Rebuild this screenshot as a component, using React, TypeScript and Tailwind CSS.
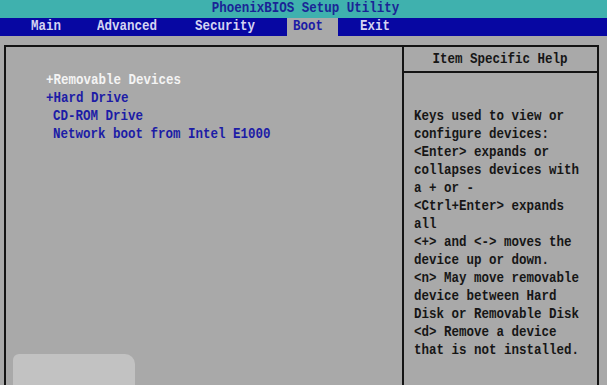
const mono = "font-['Liberation_Mono','DejaVu_Sans_Mono',monospace] font-bold";

function Line({ children, className = "" }: { children: React.ReactNode; className?: string }) {
  return (
    <div className="h-[18px] leading-[18px] whitespace-pre">
      <span className={`inline-block origin-left scale-x-[0.833] ${className}`}>{children}</span>
    </div>
  );
}

const help = [
  "Keys used to view or",
  "configure devices:",
  "<Enter> expands or",
  "collapses devices with",
  "a + or -",
  "<Ctrl+Enter> expands",
  "all",
  "<+> and <-> moves the",
  "device up or down.",
  "<n> May move removable",
  "device between Hard",
  "Disk or Removable Disk",
  "<d> Remove a device",
  "that is not installed.",
];

const bootItems = [
  { label: "+Removable Devices", color: "text-[#f4f4f4]", indent: "pl-[40px]" },
  { label: "+Hard Drive", color: "text-[#1c1ca6]", indent: "pl-[40px]" },
  { label: "CD-ROM Drive", color: "text-[#1c1ca6]", indent: "pl-[47px]" },
  { label: "Network boot from Intel E1000", color: "text-[#1c1ca6]", indent: "pl-[47px]" },
];

export default function App() {
  return (
    <div className={`relative h-[385px] w-[607px] overflow-hidden bg-[#a9a9a9] text-[15px] ${mono}`}>
      <header className="flex h-[18px] items-center justify-center bg-[#3fb1ae] pl-[4px] text-[#1a2496]">
        <span className="inline-block scale-x-[0.833] leading-[18px]">PhoenixBIOS Setup Utility</span>
      </header>

      <nav className="flex h-[18px] items-center bg-[#0707a2] pl-[31px] text-[#d4d4f2]">
        <span className="w-[66px]"><span className="inline-block origin-left scale-x-[0.833]">Main</span></span>
        <span className="w-[98px]"><span className="inline-block origin-left scale-x-[0.833]">Advanced</span></span>
        <span className="w-[92px]"><span className="inline-block origin-left scale-x-[0.833]">Security</span></span>
        <span className="flex h-full w-[51px] items-center bg-[#a9a9a9] pl-[6px] text-[#1c1ca6]">
          <span className="inline-block origin-left scale-x-[0.833]">Boot</span>
        </span>
        <span className="pl-[22px]"><span className="inline-block origin-left scale-x-[0.833]">Exit</span></span>
      </nav>

      <div className="pl-[4px] pr-[8px] pt-[9px]">
        <div className="flex h-[360px] border-2 border-b-0 border-[#141414]">
          <section className="w-[396px] shrink-0 pt-[25px]">
            {bootItems.map((item) => (
              <div key={item.label} className={item.indent}>
                <Line className={item.color}>{item.label}</Line>
              </div>
            ))}
          </section>

          <aside className="flex min-w-0 flex-1 flex-col overflow-hidden border-l-2 border-[#141414] text-[#161616]">
            <div className="flex h-[26px] items-center justify-center border-b-2 border-[#141414] pt-[2px]">
              <span className="inline-block whitespace-pre scale-x-[0.833]">Item Specific Help</span>
            </div>
            <div className="pl-[10px] pt-[35px]">
              {help.map((l) => (
                <Line key={l}>{l}</Line>
              ))}
            </div>
          </aside>
        </div>
      </div>

      {/* smudge left over in the original capture */}
      <div className="absolute bottom-0 left-[13px] h-[31px] w-[122px] rounded-tl-[6px] rounded-tr-[10px] bg-[#c2c2c2]" />
    </div>
  );
}
